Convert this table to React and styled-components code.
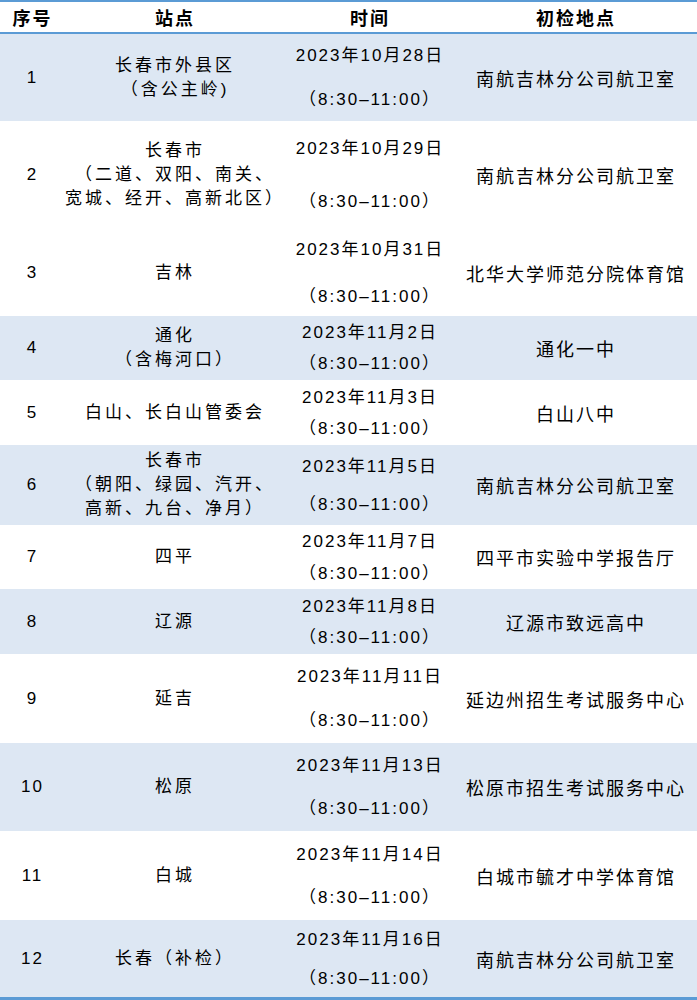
import React from 'react'
import styled, { createGlobalStyle } from 'styled-components'

const GlobalStyle = createGlobalStyle`
   html, body {
      margin: 0;
      padding: 0;
      background: #ffffff;
   }
   body {
      font-family: "Liberation Sans", "Noto Sans CJK SC", sans-serif;
      color: #000000;
   }
`

const rows = [
   { no: '1', station: ['长春市外县区', '（含公主岭)'], date: '2023年10月28日', place: '南航吉林分公司航卫室', h: 87, gap: 19, shaded: true },
   { no: '2', station: ['长春市', '（二道、双阳、南关、', '宽城、经开、高新北区）'], date: '2023年10月29日', place: '南航吉林分公司航卫室', h: 108, gap: 28 },
   { no: '3', station: ['吉林'], date: '2023年10月31日', place: '北华大学师范分院体育馆', h: 87, gap: 22 },
   { no: '4', station: ['通化', '（含梅河口）'], date: '2023年11月2日', place: '通化一中', h: 64, gap: 6, shaded: true },
   { no: '5', station: ['白山、长白山管委会'], date: '2023年11月3日', place: '白山八中', h: 65, gap: 6 },
   { no: '6', station: ['长春市', '（朝阳、绿园、汽开、', '高新、九台、净月）'], date: '2023年11月5日', place: '南航吉林分公司航卫室', h: 80, gap: 13, shaded: true },
   { no: '7', station: ['四平'], date: '2023年11月7日', place: '四平市实验中学报告厅', h: 64, gap: 7 },
   { no: '8', station: ['辽源'], date: '2023年11月8日', place: '辽源市致远高中', h: 65, gap: 6, shaded: true },
   { no: '9', station: ['延吉'], date: '2023年11月11日', place: '延边州招生考试服务中心', h: 89, gap: 19 },
   { no: '10', station: ['松原'], date: '2023年11月13日', place: '松原市招生考试服务中心', h: 88, gap: 18, shaded: true },
   { no: '11', station: ['白城'], date: '2023年11月14日', place: '白城市毓才中学体育馆', h: 89, gap: 18 },
   { no: '12', station: ['长春（补检）'], date: '2023年11月16日', place: '南航吉林分公司航卫室', h: 77, gap: 14, shaded: true },
]

const App = () => {
   return (
      <>
         <GlobalStyle />
         <Table>
            <HeaderRow>
               <HeadCell>序号</HeadCell>
               <HeadCell>站点</HeadCell>
               <HeadCell>时间</HeadCell>
               <HeadCell>初检地点</HeadCell>
            </HeaderRow>
            {rows.map(row => (
               <Row key={row.no} $h={row.h} $shaded={row.shaded}>
                  <Cell>{row.no}</Cell>
                  <StationCell>
                     {row.station.map(line => (
                        <span key={line}>{line}</span>
                     ))}
                  </StationCell>
                  <DateCell $gap={row.gap}>
                     <span>{row.date}</span>
                     <span>（8:30–11:00）</span>
                  </DateCell>
                  <PlaceCell>{row.place}</PlaceCell>
               </Row>
            ))}
         </Table>
      </>
   )
}

export default App

const Table = styled.div`
   width: 697px;
   display: flex;
   flex-direction: column;
   border-top: 2px solid #5b9bd5;
   border-bottom: 3px solid #5b9bd5;
`

const columns = `65px 220px 170px 1fr`

const HeaderRow = styled.div`
   display: grid;
   grid-template-columns: ${columns};
   height: 30px;
   border-bottom: 2px solid #5b9bd5;
   background: #ffffff;
`

const HeadCell = styled.div`
   display: flex;
   align-items: center;
   justify-content: center;
   font-size: 18px;
   font-weight: bold;
   letter-spacing: 2px;
`

const Row = styled.div`
   display: grid;
   grid-template-columns: ${columns};
   height: ${p => p.$h}px;
   background: ${p => (p.$shaded ? '#dde7f3' : '#ffffff')};
`

const Cell = styled.div`
   display: flex;
   align-items: center;
   justify-content: center;
   text-align: center;
   font-size: 17px;
   letter-spacing: 2px;
   white-space: nowrap;
`

const StationCell = styled(Cell)`
   flex-direction: column;
   letter-spacing: 3px;
   line-height: 24px;
`

const DateCell = styled(Cell)`
   flex-direction: column;
   line-height: 25px;
   gap: ${p => p.$gap}px;
`

const PlaceCell = styled(Cell)`
   font-size: 18px;
`
